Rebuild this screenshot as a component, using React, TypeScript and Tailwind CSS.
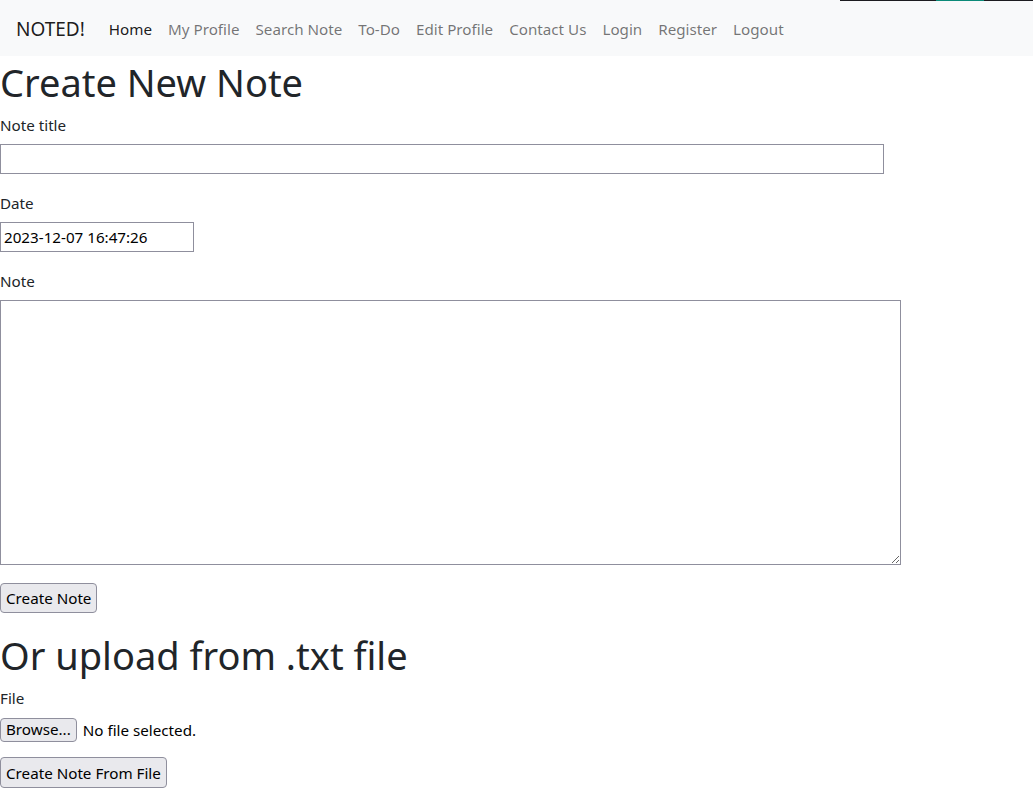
import React, { useState } from 'react';

const links = ['My Profile', 'Search Note', 'To-Do', 'Edit Profile', 'Contact Us', 'Login', 'Register', 'Logout'];

const App: React.FC = () => {
  const [title, setTitle] = useState('');
  const [date, setDate] = useState('2023-12-07 16:47:26');
  const [note, setNote] = useState('');

  return (
    <div className="relative min-h-[810px] bg-white text-[15.2px] leading-6 text-[#212529]" style={{ fontFamily: '"Noto Sans", "Liberation Sans", sans-serif' }}>
      {/* stray strip at the very top right */}
      <div className="absolute top-0 left-[840px] flex h-px w-[193px]">
        <div className="w-[96px] bg-[#1c1c20]" />
        <div className="w-[48px] bg-[#0b8a78]" />
        <div className="flex-1 bg-[#1c1c20]" />
      </div>

      <nav className="flex h-14 items-center bg-[#f8f9fa] pl-4 pt-[2px]">
        <a className="mr-4 text-[19px] text-black/90">NOTED!</a>
        <a className="px-2 py-2 text-black/90">Home</a>
        {links.map((l) => (
          <a key={l} className="px-2 py-2 text-black/55">{l}</a>
        ))}
      </nav>

      <h1 className="mb-2 pt-[4px] text-[38px] leading-[44px]">Create New Note</h1>
      <form onSubmit={(e) => e.preventDefault()}>
        <div className="mb-4">
          <label className="mb-2 block pt-[2px] leading-[22px]">Note title</label>
          <input
            className="block h-[30px] w-[884px] border border-[#8f8f9d] px-1 outline-none"
            value={title}
            onChange={(e) => setTitle(e.target.value)}
          />
        </div>
        <div className="mb-4">
          <label className="mb-2 block pt-[2px] leading-[22px]">Date</label>
          <input
            className="block h-[30px] w-[194px] border border-[#8f8f9d] px-[3px] text-black outline-none"
            value={date}
            onChange={(e) => setDate(e.target.value)}
          />
        </div>
        <div className="mb-[18px]">
          <label className="mb-2 block pt-[2px] leading-[22px]">Note</label>
          <textarea
            className="block h-[265px] w-[901px] border border-[#8f8f9d] px-1 outline-none"
            value={note}
            onChange={(e) => setNote(e.target.value)}
          />
        </div>
        <button className="h-[30px] rounded border border-[#8f8f9d] bg-[#e9e9ed] px-[5px] text-black">Create Note</button>
      </form>

      <h1 className="mt-4 mb-2 pt-[4px] text-[38px] leading-[44px]">Or upload from .txt file</h1>
      <div className="mb-[9px] pt-[2px] leading-[22px]">File</div>
      <div className="mb-[15px] flex h-6 items-center">
        <button className="h-6 rounded border border-[#8f8f9d] bg-[#e9e9ed] px-[5px] leading-none text-black">Browse...</button>
        <span className="ml-[6px] text-black">No file selected.</span>
      </div>
      <button className="h-[31px] rounded border border-[#8f8f9d] bg-[#e9e9ed] px-[5px] text-black">Create Note From File</button>
    </div>
  );
};

export default App;
